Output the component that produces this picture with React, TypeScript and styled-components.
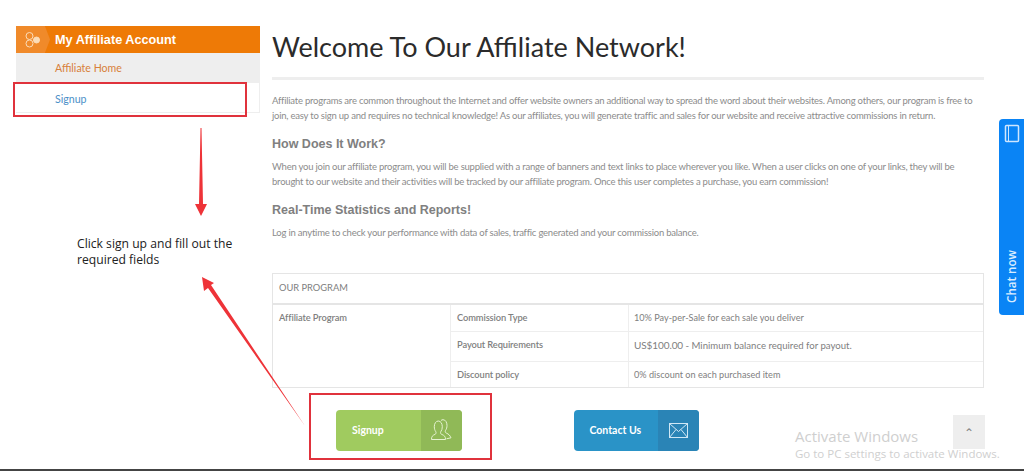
import styled, { createGlobalStyle } from 'styled-components';

const GlobalStyle = createGlobalStyle`
	html, body {
		margin: 0;
		padding: 0;
		background: #fff;
	}

	body {
		font-family: 'Lato', 'Open Sans', sans-serif;
		color: #888;
	}
`;

const rows = [
	{ label: 'Commission Type', value: '10% Pay-per-Sale for each sale you deliver', height: 26 },
	{ label: 'Payout Requirements', value: 'US$100.00', suffix: ' - Minimum balance required for payout.', height: 30, raise: 3 },
	{ label: 'Discount policy', value: '0% discount on each purchased item', height: 26 },
];

const App = () => {
	return (
		<Page>
			<GlobalStyle />
			<Layout>
				<Sidebar>
					<SideHeader>
						<HeaderIcon>
							<svg width='20' height='18' viewBox='0 0 20 18' fill='none' stroke='#fbdcb8' strokeWidth='1'>
								<circle cx='6.500' cy='5' r='3.500' />
								<circle cx='6.500' cy='12.500' r='3.500' />
								<circle cx='13.500' cy='9' r='3' fill='#fbdcb8' />
							</svg>
						</HeaderIcon>
						My Affiliate Account
					</SideHeader>
					<SideItem $active>Affiliate Home</SideItem>
					<SideItem>Signup</SideItem>
				</Sidebar>

				<Main>
					<Title>Welcome To Our Affiliate Network!</Title>
					<Text>
						Affiliate programs are common throughout the Internet and offer website owners an additional way to spread
						the word about their websites. Among others, our program is free to join, easy to sign up and requires no
						technical knowledge! As our affiliates, you will generate traffic and sales for our website and receive
						attractive commissions in return.
					</Text>
					<Heading>How Does It Work?</Heading>
					<Text>
						When you join our affiliate program, you will be supplied with a range of banners and text links to place
						wherever you like. When a user clicks on one of your links, they will be brought to our website and their
						activities will be tracked by our affiliate program. Once this user completes a purchase, you earn
						commission!
					</Text>
					<Heading>Real-Time Statistics and Reports!</Heading>
					<Text>
						Log in anytime to check your performance with data of sales, traffic generated and your commission balance.
					</Text>

					<Program>
						<ProgramHead>OUR PROGRAM</ProgramHead>
						<ProgramBody>
							<ProgramName>Affiliate Program</ProgramName>
							<ProgramRows>
								{rows.map((row) => (
									<Row key={row.label} $height={row.height} $raise={row.raise ?? 0}>
										<RowLabel>{row.label}</RowLabel>
										<RowValue>
											{row.suffix ? <Amount>{row.value}</Amount> : row.value}
											{row.suffix && <Suffix>{row.suffix}</Suffix>}
										</RowValue>
									</Row>
								))}
							</ProgramRows>
						</ProgramBody>
					</Program>

					<Actions>
						<ActionButton $bg='#a0cb5f' $side='#90b957'>
							<span>Signup</span>
							<i>
								<svg width='24' height='22' viewBox='0 0 24 22' fill='none' stroke='#e6f2d2' strokeWidth='1'>
									<path d='M3 20.500h13.500c0-3-1-4-4-5.200-1-.5-1.200-1.500-.7-2.600 1-1.300 1.500-3 1.500-5 0-3-1.500-5.700-4-5.700s-4 2.700-4 5.700c0 2 .5 3.700 1.500 5 .5 1.100.3 2.100-.7 2.600-2.700 1.200-3.600 2.200-3.600 5.200z' />
									<path d='M12 1.500c.6-.5 1.300-.8 2-.8 2.500 0 4 2.700 4 5.700 0 2-.5 3.700-1.500 5-.5 1.100-.3 2.100.7 2.600 2.700 1.200 3.800 2.500 4.800 4.800l-4.500 1' />
								</svg>
							</i>
						</ActionButton>
						<ActionButton $bg='#2a93c7' $side='#2a84b6'>
							<span>Contact Us</span>
							<i>
								<svg width='19' height='15' viewBox='0 0 19 15' fill='none' stroke='#cfe7f5' strokeWidth='1'>
									<rect x='.5' y='.5' width='18' height='14' />
									<path d='M.5.500 9.500 8.500 18.500.500M.5 14.500l6.500-8M18.500 14.500l-6.500-8' />
								</svg>
							</i>
						</ActionButton>
					</Actions>
				</Main>
			</Layout>

			<Note>Click sign up and fill out the required fields</Note>
			<RedBox $left={13} $top={82} $width={234} $height={35} />
			<RedBox $left={309} $top={393} $width={183} $height={67} />
			<Arrows viewBox='0 0 1024 471'>
				<path d='M200.500 128h1l1.500 76h4l-6 12-6-12h4z' fill='#ee3338' />
				<path d='M202 277l12 6-3 2 94 141-97-138-4 3z' fill='#ee3338' />
			</Arrows>

			<ChatTab>
				<svg width='16' height='19' viewBox='0 0 16 19' fill='none' stroke='#cfe6ff' strokeWidth='1.500'>
					<rect x='1.500' y='1.500' width='13' height='16' rx='1' />
					<path d='M4.500 1.500v16' strokeWidth='1' />
				</svg>
				<ChatLabel>Chat now</ChatLabel>
			</ChatTab>

			<ToTop>⌃</ToTop>
			<Watermark>
				<strong>Activate Windows</strong>
				Go to PC settings to activate Windows.
			</Watermark>
		</Page>
	);
};

export default App;

const Page = styled.div`
	position: relative;
	width: 1024px;
	height: 471px;
	box-sizing: border-box;
	overflow: hidden;
	border-bottom: 2px solid #444;
`;

const Layout = styled.div`
	display: flex;
	gap: 12px;
	padding: 26px 40px 0 16px;
`;

const Sidebar = styled.aside`
	width: 244px;
	flex-shrink: 0;
`;

const SideHeader = styled.div`
	display: flex;
	align-items: center;
	height: 27px;

	font-family: 'Liberation Sans', sans-serif;
	font-size: 12.700px;
	font-weight: 700;
	color: #fff;
	background: #ee7a06;
`;

const HeaderIcon = styled.span`
	display: flex;
	align-items: center;
	justify-content: center;
	width: 34px;
	margin-right: 5px;
	height: 100%;

	background: #f08a2a;
	clip-path: polygon(0 0, 85% 0, 100% 50%, 85% 100%, 0 100%);
`;

const SideItem = styled.div<{ $active?: boolean }>`
	display: flex;
	align-items: center;
	height: 30px;
	box-sizing: border-box;
	padding-left: 39px;
	padding-top: ${(p) => (p.$active ? 0 : 2)}px;

	font-size: 10.600px;
	color: ${(p) => (p.$active ? '#d8803a' : '#4b90c8')};
	background: ${(p) => (p.$active ? '#eeeeee' : '#fff')};
	border-right: 1px solid #eee;
	border-bottom: 1px solid #eee;
`;

const Main = styled.main`
	width: 712px;
`;

const Title = styled.h1`
	margin: 0 0 14px;
	padding-bottom: 10px;
	height: 41px;

	font-size: 27px;
	font-weight: 400;
	line-height: 41px;
	color: #2b2b2b;
	border-bottom: 3px solid #eee;
`;

const Text = styled.p`
	margin: 0;

	font-size: 9.500px;
	letter-spacing: -0.22px;
	line-height: 14.500px;
	color: #8c8c8c;
`;

const Heading = styled.h3`
	margin: 14px 0 8px;

	font-family: 'Liberation Sans', sans-serif;
	font-size: 12.500px;
	font-weight: 700;
	line-height: 15px;
	color: #808080;
`;

const Program = styled.section`
	margin-top: 32px;
	border: 1px solid #e5e5e5;
	font-size: 9.300px;
	color: #808080;
`;

const ProgramHead = styled.div`
	display: flex;
	align-items: center;
	height: 31px;
	box-sizing: border-box;
	padding: 0 0 2px 6px;
	border-bottom: 2px solid #e5e5e5;
`;

const ProgramBody = styled.div`
	display: flex;
`;

const ProgramName = styled.div`
	width: 178px;
	box-sizing: border-box;
	padding: 7px 6px;
	font-weight: 600;
	letter-spacing: -0.1px;
	border-right: 1px solid #eee;
`;

const ProgramRows = styled.div`
	flex: 1;
`;

const Row = styled.div<{ $height: number; $raise: number }>`
	display: flex;
	align-items: center;
	height: ${(p) => p.$height}px;
	box-sizing: border-box;

	& + & {
		border-top: 1px solid #eee;
	}

	> div {
		padding-bottom: ${(p) => p.$raise}px;
	}
`;

const RowLabel = styled.div`
	display: flex;
	align-items: center;
	width: 178px;
	height: 100%;
	box-sizing: border-box;
	padding-left: 6px;
	font-weight: 600;
	letter-spacing: -0.1px;
	border-right: 1px solid #eee;
`;

const RowValue = styled.div`
	padding-left: 5px;
	font-size: 9.150px;
`;

const Amount = styled.span`
	font-size: 10px;
	letter-spacing: -0.1px;
`;

const Suffix = styled.span`
	font-size: 9.600px;
`;

const Actions = styled.div`
	display: flex;
	gap: 112px;
	margin: 22px 0 0 64px;
`;

const ActionButton = styled.div<{ $bg: string; $side: string }>`
	display: flex;
	align-items: center;
	justify-content: space-between;
	width: 125.500px;
	height: 41px;
	overflow: hidden;

	font-size: 10.500px;
	font-weight: 700;
	color: #fff;
	background: ${(p) => p.$bg};
	border-radius: 4px;

	> span {
		padding-left: 16px;
	}

	> i {
		display: flex;
		align-items: center;
		justify-content: center;
		width: 41px;
		height: 100%;
		background: ${(p) => p.$side};
	}
`;

const Note = styled.div`
	position: absolute;
	left: 77px;
	top: 236px;
	width: 170px;

	font-family: 'Open Sans', sans-serif;
	font-size: 12.150px;
	line-height: 15.500px;
	color: #222;
`;

const RedBox = styled.div<{ $left: number; $top: number; $width: number; $height: number }>`
	position: absolute;
	left: ${(p) => p.$left}px;
	top: ${(p) => p.$top}px;
	width: ${(p) => p.$width}px;
	height: ${(p) => p.$height}px;
	box-sizing: border-box;
	border: 2.500px solid #e0323c;
`;

const Arrows = styled.svg`
	position: absolute;
	left: 0;
	top: 0;
	width: 1024px;
	height: 471px;
	pointer-events: none;
`;

const ChatTab = styled.div`
	position: absolute;
	left: 999px;
	top: 119px;
	display: flex;
	flex-direction: column;
	align-items: center;
	justify-content: space-between;
	width: 25px;
	height: 196px;
	box-sizing: border-box;
	padding: 5px 0 12px;

	background: #0a84f5;
	border-radius: 4px 0 0 4px;
`;

const ChatLabel = styled.span`
	writing-mode: vertical-rl;
	transform: rotate(180deg);

	font-family: 'Open Sans', sans-serif;
	font-size: 11.600px;
	font-weight: 600;
	color: #d8ecff;
`;

const ToTop = styled.div`
	position: absolute;
	left: 953px;
	top: 415px;
	display: flex;
	align-items: center;
	justify-content: center;
	width: 32px;
	height: 34px;

	font-size: 12px;
	color: #888;
	background: #eee;
`;

const Watermark = styled.div`
	position: absolute;
	left: 795px;
	top: 426px;
	display: flex;
	flex-direction: column;

	font-family: 'Open Sans', sans-serif;
	font-size: 11.500px;
	line-height: 15px;
	color: #cfcfcf;
	white-space: nowrap;

	> strong {
		font-size: 15px;
		font-weight: 400;
		line-height: 20px;
	}
`;
